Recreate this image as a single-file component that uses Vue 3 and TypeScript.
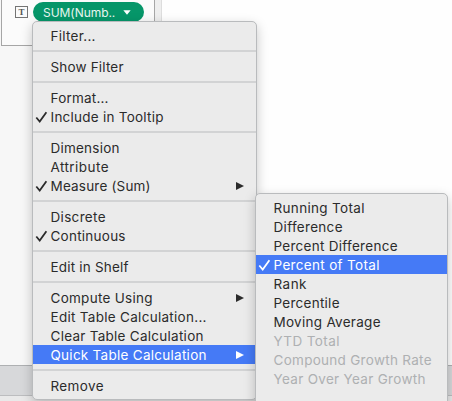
<script setup lang="ts">
interface Item {
  label: string
  width: number
  checked?: boolean
  arrow?: boolean
  active?: boolean
  disabled?: boolean
}

const groups: Item[][] = [
  [{ label: 'Filter...', width: 46 }],
  [{ label: 'Show Filter', width: 74 }],
  [
    { label: 'Format...', width: 59 },
    { label: 'Include in Tooltip', width: 114, checked: true },
  ],
  [
    { label: 'Dimension', width: 70 },
    { label: 'Attribute', width: 59 },
    { label: 'Measure (Sum)', width: 101, checked: true, arrow: true },
  ],
  [
    { label: 'Discrete', width: 56 },
    { label: 'Continuous', width: 76, checked: true },
  ],
  [{ label: 'Edit in Shelf', width: 79 }],
  [
    { label: 'Compute Using', width: 103, arrow: true },
    { label: 'Edit Table Calculation...', width: 157 },
    { label: 'Clear Table Calculation', width: 154 },
    { label: 'Quick Table Calculation', width: 157, arrow: true, active: true },
  ],
  [{ label: 'Remove', width: 54 }],
]

const calculations: Item[] = [
  { label: 'Running Total', width: 92 },
  { label: 'Difference', width: 70 },
  { label: 'Percent Difference', width: 125 },
  { label: 'Percent of Total', width: 107, checked: true, active: true },
  { label: 'Rank', width: 34 },
  { label: 'Percentile', width: 67 },
  { label: 'Moving Average', width: 108 },
  { label: 'YTD Total', width: 67, disabled: true },
  { label: 'Compound Growth Rate', width: 159, disabled: true },
  { label: 'Year Over Year Growth', width: 153, disabled: true },
]
</script>

<template>
  <main class="workspace">
    <section class="marks">
      <span class="type">T</span>
      <div class="pill">
        <span>SUM(Numb..</span>
        <svg width="8" height="5" viewBox="0 0 8 5"><path d="M0.3 0.3H7.7L4 4.7Z" fill="#fff" /></svg>
      </div>
    </section>
    <div class="divider"></div>
    <div class="status"></div>

    <div class="menu main-menu">
      <div v-for="(group, index) in groups" :key="index" class="group">
        <div v-for="item in group" :key="item.label" class="item" :class="{ active: item.active }">
          <svg v-if="item.checked" class="check" width="13" height="12" viewBox="0 0 13 12">
            <path d="M1.3 6.5L4.7 10.5L11.4 1.2" />
          </svg>
          <svg class="label" :width="item.width" height="19">
            <text x="-0.5" y="15" :textLength="item.width - 1" lengthAdjust="spacing">{{ item.label }}</text>
          </svg>
          <svg v-if="item.arrow" class="arrow" width="8" height="8" viewBox="0 0 8 8"><path d="M0 0L8 4L0 8Z" /></svg>
        </div>
      </div>
    </div>

    <div class="menu submenu">
      <div
        v-for="item in calculations"
        :key="item.label"
        class="item"
        :class="{ active: item.active, disabled: item.disabled }"
      >
        <svg v-if="item.checked" class="check" width="13" height="12" viewBox="0 0 13 12">
          <path d="M1.3 6.5L4.7 10.5L11.4 1.2" />
        </svg>
        <svg class="label" :width="item.width" height="19">
          <text x="-0.5" y="15" :textLength="item.width - 1" lengthAdjust="spacing">{{ item.label }}</text>
        </svg>
      </div>
    </div>
  </main>
</template>

<style>
body {
  margin: 0;
  overflow: hidden;
}
</style>

<style scoped>
.workspace {
  position: relative;
  width: 452px;
  height: 401px;
  overflow: hidden;
  background: linear-gradient(90deg, #f7f7f7 0 162px, #fefefe 162px);
  font-family: Inter, 'Liberation Sans', sans-serif;
}
.marks {
  box-sizing: border-box;
  width: 154px;
  height: 46px;
  margin-left: 1px;
  padding: 2px 0 0 13px;
  display: flex;
  align-items: flex-start;
  border: 1px solid #a6a6a6;
  border-top: 0;
  background: #fbfbfb;
}
.type {
  box-sizing: border-box;
  width: 13px;
  height: 12px;
  margin: 4px 5px 0 0;
  border: 1px solid #747474;
  color: #555;
  font: bold 9px/10px 'Liberation Serif', serif;
  text-align: center;
}
.pill {
  box-sizing: border-box;
  width: 111px;
  height: 20px;
  padding: 0 13px 0 10px;
  display: flex;
  align-items: center;
  justify-content: space-between;
  border-radius: 10px;
  background: #069669;
  color: #e8f5f0;
  font-size: 12px;
  letter-spacing: -0.05px;
}
.divider {
  position: absolute;
  left: 155px;
  top: 0;
  width: 6px;
  height: 365px;
  background: #eee;
  border-right: 1px solid #ddd;
}
.status {
  position: absolute;
  left: 0;
  top: 365px;
  box-sizing: border-box;
  width: 452px;
  height: 31px;
  background: #d7d8da;
  border-top: 1px solid #aeb0b2;
  border-bottom: 1px solid #bcbdbf;
  box-shadow: 0 6px #e9e9e9;
}
.menu {
  position: absolute;
  box-sizing: border-box;
  background: #ebebeb;
  color: #2b2b2b;
}
.main-menu {
  left: 32px;
  top: 21px;
  width: 225px;
  height: 379px;
  padding-top: 4px;
  border: 1px solid #b9bbbd;
  border-radius: 5px;
  box-shadow: 0 4px 12px rgba(0, 0, 0, 0.22);
}
.submenu {
  left: 255px;
  top: 193px;
  width: 193px;
  height: 220px;
  padding-top: 4px;
  border: 1px solid #b9bbbd;
  border-radius: 5px;
  box-shadow: 0 4px 12px rgba(0, 0, 0, 0.22);
}
.group + .group::before {
  content: '';
  display: block;
  height: 2px;
  margin: 5px 0;
  background: #d2d3d4;
}
.item {
  height: 19px;
  display: grid;
  grid-template-columns: 18px 1fr 20px;
  align-items: center;
}
.check {
  grid-column: 1;
  margin: 1px 0 0 2px;
  fill: none;
  stroke: currentColor;
  stroke-width: 1.8;
}
.label {
  grid-column: 2;
  grid-row: 1;
  overflow: visible;
  fill: currentColor;
  font-size: 13.5px;
}
.arrow {
  grid-column: 3;
  fill: currentColor;
}
.active {
  background: #457af6;
  color: #fff;
}
.disabled {
  color: #aeb0b2;
}
</style>
